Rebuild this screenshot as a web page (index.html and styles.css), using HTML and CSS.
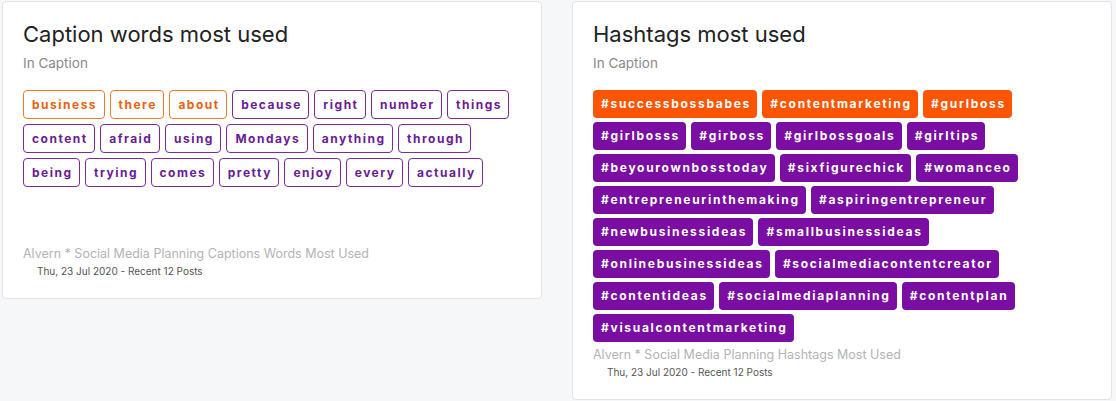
FILE: index.html
```html
<!DOCTYPE html>
<html>
<head>
<meta charset="utf-8">
<link rel="stylesheet" href="styles.css">
</head>
<body>
<div class="grid">
  <section class="card">
    <h2 class="title">Caption words most used</h2>
    <div class="sub">In Caption</div>
    <div class="tags tags-outline">
      <span class="tag o-orange">business</span>
      <span class="tag o-orange">there</span>
      <span class="tag o-orange">about</span>
      <span class="tag o-purple">because</span>
      <span class="tag o-purple">right</span>
      <span class="tag o-purple">number</span>
      <span class="tag o-purple">things</span>
      <span class="tag o-purple">content</span>
      <span class="tag o-purple">afraid</span>
      <span class="tag o-purple">using</span>
      <span class="tag o-purple">Mondays</span>
      <span class="tag o-purple">anything</span>
      <span class="tag o-purple">through</span>
      <span class="tag o-purple">being</span>
      <span class="tag o-purple">trying</span>
      <span class="tag o-purple">comes</span>
      <span class="tag o-purple">pretty</span>
      <span class="tag o-purple">enjoy</span>
      <span class="tag o-purple">every</span>
      <span class="tag o-purple">actually</span>
    </div>
    <div class="foot">Alvern * Social Media Planning Captions Words Most Used</div>
    <div class="date">Thu, 23 Jul 2020 - Recent 12 Posts</div>
  </section>
  <section class="card">
    <h2 class="title">Hashtags most used</h2>
    <div class="sub">In Caption</div>
    <div class="tags tags-filled">
      <span class="tag f-orange">#successbossbabes</span>
      <span class="tag f-orange">#contentmarketing</span>
      <span class="tag f-orange">#gurlboss</span>
      <span class="tag f-purple">#girlbosss</span>
      <span class="tag f-purple">#girboss</span>
      <span class="tag f-purple">#girlbossgoals</span>
      <span class="tag f-purple">#girltips</span>
      <span class="tag f-purple">#beyourownbosstoday</span>
      <span class="tag f-purple">#sixfigurechick</span>
      <span class="tag f-purple">#womanceo</span>
      <span class="tag f-purple">#entrepreneurinthemaking</span>
      <span class="tag f-purple">#aspiringentrepreneur</span>
      <span class="tag f-purple">#newbusinessideas</span>
      <span class="tag f-purple">#smallbusinessideas</span>
      <span class="tag f-purple">#onlinebusinessideas</span>
      <span class="tag f-purple">#socialmediacontentcreator</span>
      <span class="tag f-purple">#contentideas</span>
      <span class="tag f-purple">#socialmediaplanning</span>
      <span class="tag f-purple">#contentplan</span>
      <span class="tag f-purple">#visualcontentmarketing</span>
    </div>
    <div class="foot">Alvern * Social Media Planning Hashtags Most Used</div>
    <div class="date">Thu, 23 Jul 2020 - Recent 12 Posts</div>
  </section>
</div>
</body>
</html>
```

FILE: styles.css
```css
* { box-sizing: border-box; }
html, body { margin: 0; }
body {
  background: #f6f7f9;
  font-family: "Inter", "Noto Sans", sans-serif;
  padding: 1px 0 0 2px;
}
.grid {
  display: grid;
  grid-template-columns: 540px 540px;
  column-gap: 30px;
  align-items: start;
}
.card {
  background: #fff;
  border: 1px solid #e2e3e6;
  border-radius: 4px;
  padding: 17px 20px 20px 20px;
}
.title {
  margin: 0;
  font-size: 22px;
  line-height: 30px;
  font-weight: 400;
  color: #222;
}
.sub {
  margin-top: 4px;
  font-size: 13.5px;
  line-height: 20px;
  color: #8a8a8a;
}
.tags {
  margin-top: 17px;
  display: flex;
  flex-wrap: wrap;
  column-gap: 5px;
  align-content: flex-start;
}
.tags-outline { row-gap: 5px; min-height: 151px; }
.tags-filled { row-gap: 4px; }
.tag {
  font-size: 12px;
  font-weight: 700;
  letter-spacing: 1.5px;
  line-height: 17px;
  border-radius: 4px;
  white-space: nowrap;
}
.o-orange, .o-purple {
  border: 1px solid;
  padding: 5px 6.5px 5px 8px;
  background: #fff;
}
.o-orange { color: #f05f0e; border-color: #f07a2a; }
.o-purple { color: #6a1b9a; border-color: #7a2aa6; }
.f-orange, .f-purple {
  color: #fff;
  line-height: 18px;
  letter-spacing: 1.7px;
  padding: 5px 6.3px 5px 8px;
}
.f-orange { background: #ff5500; }
.f-purple { background: #7b0ea2; }
.foot {
  margin-top: 3px;
  font-size: 12.5px;
  line-height: 20px;
  color: #b3b3b6;
}
.date {
  padding-left: 14px;
  font-size: 10px;
  line-height: 14px;
  color: #555;
}
```
